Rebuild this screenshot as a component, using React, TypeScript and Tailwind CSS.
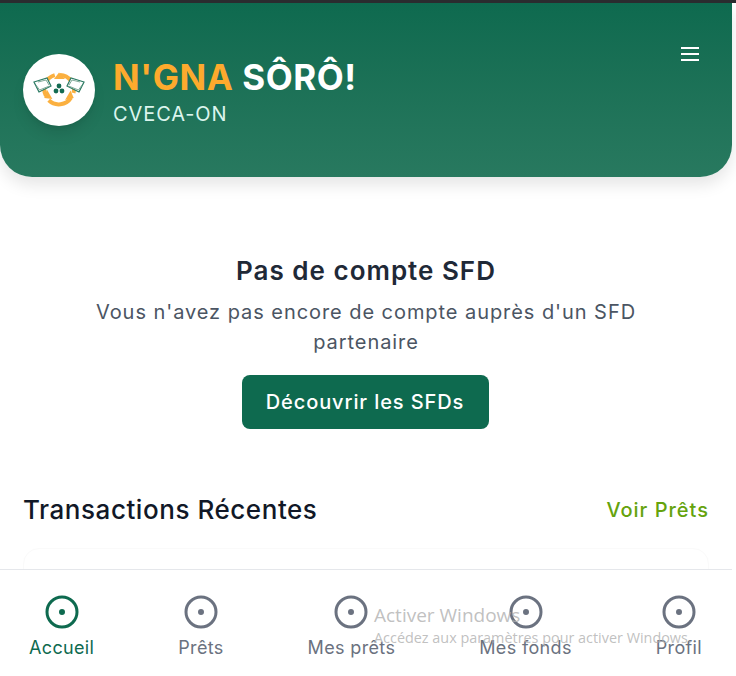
import { CircleDot } from 'lucide-react';

const NAV_ITEMS = [
  { label: 'Accueil', active: true },
  { label: 'Prêts', active: false },
  { label: 'Mes prêts', active: false },
  { label: 'Mes fonds', active: false },
  { label: 'Profil', active: false },
];

const Logo = () => (
  <svg viewBox="0 0 72 72" className="h-[72px] w-[72px]">
    {/* anneau orange : trois fleches */}
    <g fill="none" stroke="#fbb040" strokeWidth="4">
      {[0, 120, 240].map((angle) => (
        <g key={angle} transform={`rotate(${angle} 36 35.5)`}>
          <path d="M37 21a14.5 14.5 0 0 1 13.5 18" />
          <path d="M36 18.5l6 6.5h-11z" fill="#fbb040" stroke="none" />
        </g>
      ))}
    </g>
    {/* livres */}
    <g fill="#ffffff" stroke="#2b7a63" strokeWidth="1.2">
      <path d="M11 28l13-4 4 8-12 6z" />
      <path d="M61 28l-13-4-4 8 12 6z" />
    </g>
    <g fill="none" stroke="#7fa997" strokeWidth="1">
      <path d="M13 31l3.5 5 10-4" />
      <path d="M59 31l-3.500 5-10-4" />
      <path d="M15 28l8-2 3 5" />
      <path d="M57 28l-8-2-3 5" />
    </g>
    {/* points */}
    <circle cx="36" cy="32" r="2.4" fill="#136b52" />
    <circle cx="33" cy="37" r="2.4" fill="#136b52" />
    <circle cx="39" cy="37" r="2.4" fill="#136b52" />
  </svg>
);

export default function App() {
  return (
    <div className="relative h-[676px] w-[736px] overflow-hidden bg-white font-['Inter','Liberation_Sans',sans-serif]">
      <div className="h-[3px] bg-[#2b2d30]" />
      <div className="flex h-[673px] w-[732px] flex-col">
        <header className="flex h-[174px] shrink-0 items-start justify-between rounded-b-[32px] bg-gradient-to-b from-[#0e6a4f] to-[#28795f] pl-[23px] pr-[33px] shadow-[0_8px_16px_rgba(0,0,0,0.1)]">
          <div className="mt-[51px] flex items-start gap-[18px]">
            <div className="flex h-[72px] w-[72px] items-center justify-center rounded-full bg-white shadow-lg">
              <Logo />
            </div>
            <div className="pt-[3px]">
              <h1 className="text-[35px] font-bold leading-[40px] tracking-[0.55px]">
                <span className="text-[#fdaa2d]">N'GNA</span> <span className="text-white">SÔRÔ!</span>
              </h1>
              <p className="mt-[3px] text-[20px] leading-[28px] tracking-[0.9px] text-[#dcf5ee]">CVECA-ON</p>
            </div>
          </div>
          <button className="mt-[44px] text-white">
            <svg width="18" height="14" viewBox="0 0 18 14" fill="currentColor">
              <rect width="18" height="2" />
              <rect y="6" width="18" height="2" />
              <rect y="12" width="18" height="2" />
            </svg>
          </button>
        </header>

        <main className="flex min-h-0 flex-1 flex-col overflow-hidden px-[23px]">
          <section className="mt-[78px] flex flex-col items-center px-[50px] text-center">
            <h2 className="text-[26px] font-semibold leading-[32px] tracking-[1px] text-[#1f2937]">Pas de compte SFD</h2>
            <p className="mt-[10px] text-[20px] leading-[30px] tracking-[0.94px] text-[#4b5563]">
              Vous n'avez pas encore de compte auprès d'un SFD partenaire
            </p>
            <button className="mt-[18px] -ml-[2px] h-[54px] w-[247px] rounded-[8px] bg-[#0e6a4f] text-[20px] font-medium tracking-[0.9px] text-white">
              Découvrir les SFDs
            </button>
          </section>

          <div className="mt-[63px] flex items-center justify-between">
            <h3 className="text-[26px] font-medium leading-[36px] tracking-[0.55px] text-[#111827]">Transactions Récentes</h3>
            <a className="text-[20px] font-medium tracking-[1px] text-[#65a30d]">Voir Prêts</a>
          </div>
          <div className="mt-[20px] h-[100px] shrink-0 rounded-t-[16px] border border-[#fafafa]" />
        </main>

        <nav className="flex h-[107px] shrink-0 items-start justify-between border-t border-[#e5e7eb] bg-white pl-[29px] pr-[30px] pt-[24px]">
          {NAV_ITEMS.map((item) => (
            <div
              key={item.label}
              className={`flex flex-col items-center ${item.active ? 'text-[#0e6a4f]' : 'text-[#6b7280]'}`}
            >
              <CircleDot size={36} strokeWidth={2} />
              <span className="mt-[4px] text-[18px] leading-[28px] tracking-[0.35px]">{item.label}</span>
            </div>
          ))}
        </nav>
      </div>

      {/* filigrane Windows */}
      <div className="pointer-events-none absolute left-[374px] top-[602px] font-['Open_Sans',sans-serif] text-[#b0b0b0]/80">
        <p className="text-[19px] leading-[26px]">Activer Windows</p>
        <p className="text-[14.4px] leading-[20px]">Accédez aux paramètres pour activer Windows.</p>
      </div>
    </div>
  );
}
